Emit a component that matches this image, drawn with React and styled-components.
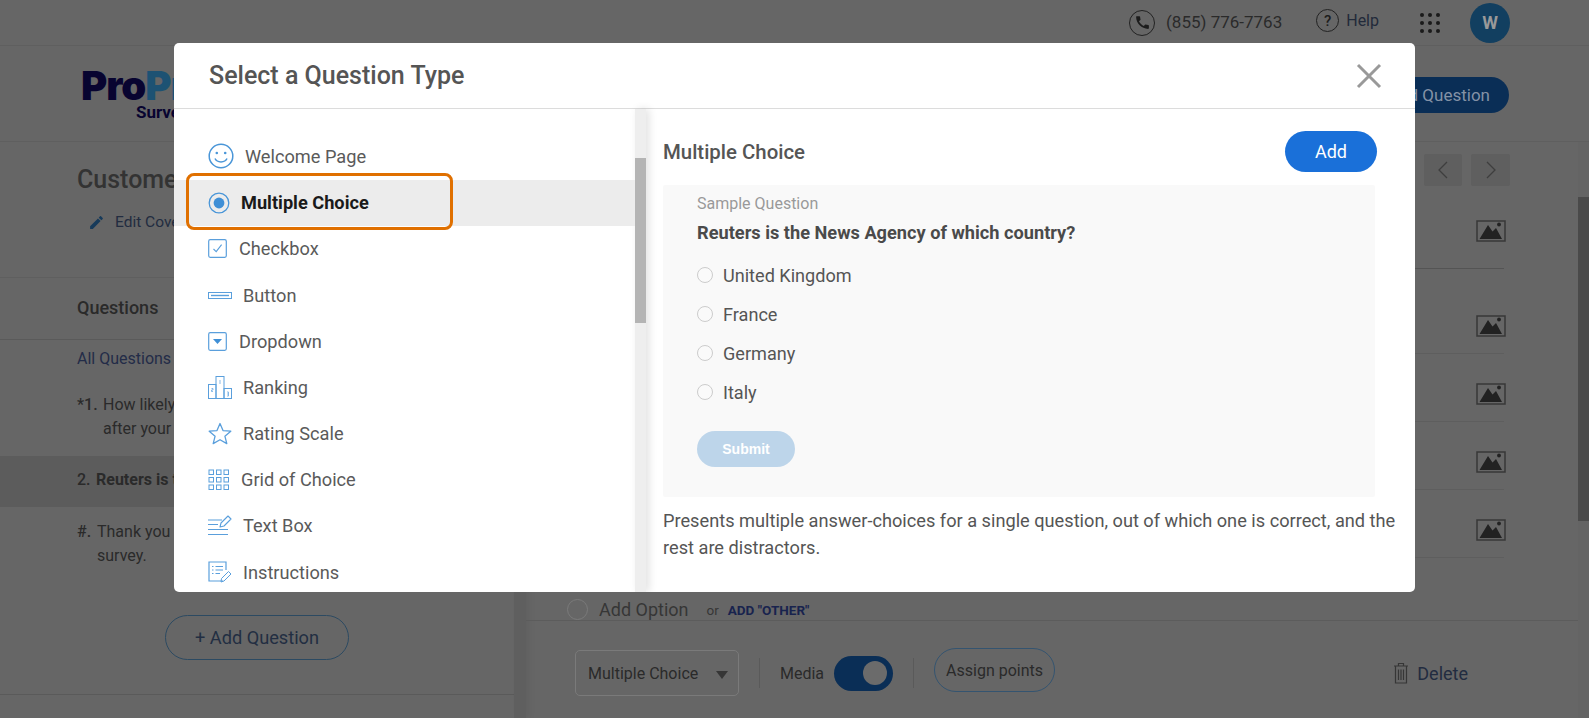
import React from 'react'
import styled, { createGlobalStyle } from 'styled-components'
import { MdCall, MdEdit } from 'react-icons/md'

const GlobalStyle = createGlobalStyle`
  html, body { margin: 0; padding: 0; height: 100%; overflow: hidden; background: #666; }
  * { box-sizing: border-box; }
  body { font-family: Roboto, "Liberation Sans", sans-serif; color: #2e2e2e; }
`

const Page = styled.div`
  position: relative;
  height: 718px;
  display: flex;
  flex-direction: column;
  background: #666;
  overflow: hidden;
`

const TopBar = styled.div`
  height: 46px;
  flex: none;
  display: flex;
  align-items: center;
  justify-content: flex-end;
  padding-right: 79px;
  border-bottom: 1px solid #5f5f5f;
`

const CallIcon = styled.span`
  width: 26px;
  height: 26px;
  border: 1.5px solid #222;
  border-radius: 50%;
  display: flex;
  align-items: center;
  justify-content: center;
  font-size: 17px;
  color: #1c1c1c;
  margin-right: 11px;
`

const PhoneNumber = styled.span`
  font-size: 17px;
  color: #2a2a2a;
  margin: -1px 34px 0 0;
`

const HelpIcon = styled.span`
  width: 23px;
  height: 23px;
  border: 1.5px solid #222;
  border-radius: 50%;
  display: flex;
  align-items: center;
  justify-content: center;
  font-size: 15px;
  font-weight: 500;
  color: #1c1c1c;
  margin: -4px 7px 0 0;
`

const HelpLabel = styled.span`
  font-size: 16px;
  color: #222a3a;
  margin: -4px 41px 0 0;
`

const Dots = styled.div`
  display: grid;
  grid-template-columns: repeat(3, 4px);
  gap: 4px;
  margin-right: 30px;
  & span {
    width: 4px;
    height: 4px;
    border-radius: 50%;
    background: #1a1a1a;
  }
`

const Avatar = styled.div`
  width: 40px;
  height: 40px;
  border-radius: 50%;
  background: #123f60;
  color: #999;
  font-size: 18px;
  font-weight: 700;
  display: flex;
  align-items: center;
  justify-content: center;
`

const Header = styled.div`
  height: 96px;
  flex: none;
  display: flex;
  align-items: center;
  justify-content: space-between;
  padding: 0 80px 0 81px;
  border-bottom: 1px solid #5f5f5f;
`

const Logo = styled.div`
  margin-top: 5px;
`

const LogoMark = styled.div`
  font-family: Inter, sans-serif;
  font-size: 40px;
  line-height: 32px;
  font-weight: 900;
  letter-spacing: -1px;
  color: #080430;
  & b { color: #1d5273; font-weight: 900; }
`

const LogoSub = styled.div`
  font-size: 17px;
  line-height: 20px;
  font-weight: 700;
  color: #080430;
  margin-left: 55px;
`

const AddQuestionTop = styled.button`
  width: 170px;
  height: 36px;
  border: 0;
  border-radius: 18px;
  background: #0a2e56;
  color: #8492a6;
  font: 400 17px Roboto, sans-serif;
  text-align: right;
  padding: 0 19px 0 0;
  margin-top: 3px;
`

const Body = styled.div`
  flex: 1;
  display: flex;
  min-height: 0;
`

const Sidebar = styled.aside`
  width: 514px;
  flex: none;
  display: flex;
  flex-direction: column;
`

const SidebarGutter = styled.div`
  width: 12px;
  flex: none;
  background: #5f5f5f;
  box-shadow: 4px 0 6px rgba(0, 0, 0, 0.05);
`

const SurveyBlock = styled.div`
  height: 136px;
  padding: 22px 0 0 77px;
  border-bottom: 1px solid #5f5f5f;
`

const SurveyTitle = styled.h2`
  margin: 0;
  font-size: 25px;
  line-height: 32px;
  font-weight: 500;
  color: #333;
`

const EditCover = styled.div`
  margin: 17px 0 0 11px;
  display: flex;
  align-items: center;
  gap: 10px;
  font-size: 15.5px;
  color: #222c40;
  & svg { font-size: 17px; color: #163a5a; }
`

const QuestionsHead = styled.div`
  height: 62px;
  padding: 0 0 2px 77px;
  display: flex;
  align-items: center;
  font-size: 18px;
  font-weight: 500;
  color: #2a2a2a;
  border-bottom: 1px solid #5a5a5a;
`

const AllQuestions = styled.div`
  padding: 9px 0 0 77px;
  font-size: 16px;
  line-height: 20px;
  color: #232c48;
`

const QuestionRow = styled.div`
  display: flex;
  align-items: ${props => (props.$active ? 'center' : 'flex-start')};
  height: ${props => (props.$active ? '51px' : 'auto')};
  margin-top: ${props => props.$top}px;
  padding: ${props => (props.$active ? '0 0 3px 77px' : '0 0 0 77px')};
  background: ${props => (props.$active ? '#5c5c5c' : 'transparent')};
  font-size: 16px;
  line-height: 24px;
  font-weight: ${props => (props.$active ? 700 : 400)};
  color: #2a2a2a;
`

const QuestionNo = styled.span`
  width: ${props => props.$width}px;
  flex: none;
  font-weight: 500;
`

const AddQuestion = styled.button`
  display: block;
  margin: 47px 0 0 165px;
  width: 184px;
  height: 45px;
  border: 1px solid #2c4a62;
  border-radius: 23px;
  background: transparent;
  color: #222e42;
  font: 400 18.2px Roboto, sans-serif;
`

const SidebarFoot = styled.div`
  margin-top: 34px;
  border-top: 1px solid #5a5a5a;
`

const Main = styled.main`
  flex: 1;
  display: flex;
  min-width: 0;
`

const MainColumn = styled.div`
  flex: 1;
  display: flex;
  flex-direction: column;
  min-width: 0;
`

const NavRow = styled.div`
  height: 54px;
  padding: 12px 0 0 0;
  display: flex;
  justify-content: flex-end;
  gap: 9px;
  margin-right: 68px;
`

const NavButton = styled.div`
  width: ${props => props.$width}px;
  height: 32px;
  background: #5f5f5f;
  border-radius: 2px;
  display: flex;
  align-items: center;
  justify-content: center;
`

const OptionRow = styled.div`
  height: ${props => props.$height}px;
  margin-right: 74px;
  border-bottom: 1px solid ${props => (props.$strong ? '#545454' : '#5e5e5e')};
  display: flex;
  align-items: flex-start;
  justify-content: flex-end;
  padding-top: ${props => props.$pad}px;
  & svg { margin-right: -2px; }
`

const AddOptionRow = styled.div`
  height: 63px;
  padding: 41px 0 0 41px;
  display: flex;
  align-items: center;
  border-bottom: 1px solid #5c5c5c;
`

const EmptyRadio = styled.span`
  width: 21px;
  height: 21px;
  border-radius: 50%;
  border: 1.5px solid #7a7a7a;
  margin-right: 11px;
`

const AddOptionText = styled.span`
  font-size: 18px;
  color: #363636;
`

const OrText = styled.span`
  font-size: 13.5px;
  color: #363636;
  margin: 0 9px 0 18px;
`

const OtherLink = styled.span`
  font-size: 13.5px;
  font-weight: 700;
  color: #18234e;
`

const FooterBar = styled.div`
  height: 97px;
  padding: 7px 110px 0 49px;
  display: flex;
  align-items: center;
`

const TypeSelect = styled.div`
  width: 164px;
  height: 46px;
  border: 1px solid #7a7a7a;
  border-radius: 5px;
  padding: 0 10px 0 12px;
  display: flex;
  align-items: center;
  justify-content: space-between;
  font-size: 16px;
  color: #2a2a2a;
  &::after {
    content: '';
    border-left: 6px solid transparent;
    border-right: 6px solid transparent;
    border-top: 8px solid #363636;
    margin-top: 3px;
  }
`

const Divider = styled.span`
  width: 1px;
  height: 30px;
  background: #5a5a5a;
  margin: ${props => props.$margin};
`

const MediaLabel = styled.span`
  font-size: 16px;
  color: #2a2a2a;
  margin-right: 10px;
`

const Toggle = styled.div`
  width: 59px;
  height: 35px;
  border-radius: 18px;
  background: #0a2e56;
  display: flex;
  align-items: center;
  justify-content: flex-end;
  padding-right: 6px;
  &::after {
    content: '';
    width: 24px;
    height: 24px;
    border-radius: 50%;
    background: #6b6b6b;
  }
`

const AssignPoints = styled.button`
  width: 121px;
  height: 44px;
  border: 1px solid #345470;
  border-radius: 22px;
  background: transparent;
  color: #2a2a2a;
  font: 400 16px Roboto, sans-serif;
  margin-top: -6px;
`

const DeleteAction = styled.div`
  margin-left: auto;
  display: flex;
  align-items: center;
  gap: 8px;
  font-size: 18px;
  color: #222c40;
`

const ScrollRail = styled.div`
  width: 11px;
  flex: none;
  background: #646464;
  &::before {
    content: '';
    display: block;
    height: 324px;
    margin-top: 55px;
    background: #4a4a4a;
  }
`

const Modal = styled.section`
  position: absolute;
  left: 174px;
  top: 43px;
  width: 1241px;
  height: 549px;
  background: #fff;
  border-radius: 5px;
  display: flex;
  flex-direction: column;
  overflow: hidden;
`

const ModalHead = styled.header`
  height: 66px;
  flex: none;
  padding: 0 33px 0 35px;
  display: flex;
  align-items: center;
  justify-content: space-between;
  border-bottom: 1px solid #dcdcdc;
`

const ModalTitle = styled.h1`
  margin: 0;
  font-size: 25px;
  font-weight: 500;
  color: #555;
`

const ModalBody = styled.div`
  flex: 1;
  display: flex;
  min-height: 0;
`

const TypeList = styled.nav`
  width: 461px;
  flex: none;
  padding-top: 24.4px;
  overflow: hidden;
`

const TypeItem = styled.div`
  position: relative;
  height: 46.2px;
  padding-left: 34px;
  display: flex;
  align-items: center;
  gap: ${props => props.$gap}px;
  background: ${props => (props.$active ? '#ececec' : 'transparent')};
  font-size: 18.2px;
  font-weight: ${props => (props.$active ? 700 : 400)};
  color: ${props => (props.$active ? '#1a1a1a' : '#5a5a5a')};
`

const Highlight = styled.span`
  position: absolute;
  left: 12px;
  top: -7px;
  width: 267px;
  height: 57px;
  border: 3px solid #e07000;
  border-radius: 8px;
`

const ListRail = styled.div`
  width: 11px;
  flex: none;
  background: #eee;
  box-shadow: 3px 0 8px rgba(0, 0, 0, 0.12);
  &::before {
    content: '';
    display: block;
    height: 165px;
    margin-top: 49px;
    background: #b4b4b4;
  }
`

const Detail = styled.div`
  flex: 1;
  padding: 22px 16px 0 17px;
  min-width: 0;
`

const DetailHead = styled.div`
  width: 714px;
  display: flex;
  align-items: center;
  justify-content: space-between;
`

const DetailTitle = styled.h3`
  margin: 0;
  font-size: 20.4px;
  font-weight: 500;
  color: #555;
`

const AddButton = styled.button`
  width: 92px;
  height: 41px;
  border: 0;
  border-radius: 21px;
  background: #1a70d9;
  color: #fff;
  font: 400 18px Roboto, sans-serif;
`

const SampleBox = styled.div`
  width: 712px;
  height: 312px;
  margin-top: 13px;
  padding: 9px 0 0 34px;
  background: #f9f9f9;
  border-radius: 2px;
`

const SampleLabel = styled.div`
  font-size: 16px;
  line-height: 20px;
  color: #999;
`

const SampleQuestion = styled.div`
  margin: 7px 0 11px;
  font-size: 18.2px;
  line-height: 24px;
  font-weight: 700;
  color: #4a4a4a;
`

const Choice = styled.div`
  height: 39px;
  display: flex;
  align-items: center;
  gap: 10px;
  font-size: 18.1px;
  color: #555;
  &::before {
    content: '';
    width: 14px;
    height: 14px;
    margin-top: -2px;
    border: 1px solid #ccc;
    border-radius: 50%;
    background: #fafafa;
  }
`

const SubmitButton = styled.button`
  display: block;
  width: 98px;
  height: 36px;
  margin-top: 19px;
  border: 0;
  border-radius: 18px;
  background: #bdd5ea;
  color: #fff;
  font: 700 14px "Liberation Sans", Arial, sans-serif;
`

const Description = styled.p`
  margin: 10px 0 0;
  font-size: 18.2px;
  line-height: 27px;
  color: #555;
`

const blue = '#5a9fdc'

const CloseIcon = () => (
  <svg width="26" height="26" viewBox="0 0 26 26">
    <path d="M2 2 L24 24 M24 2 L2 24" stroke="#999" strokeWidth="3" fill="none" />
  </svg>
)

const SmileIcon = () => (
  <svg width="26" height="26" viewBox="0 0 26 26" fill="none" stroke="#4a96d8" strokeWidth="1.5">
    <circle cx="13" cy="13" r="11.8" />
    <circle cx="8.8" cy="10" r="1.3" fill="#4a96d8" stroke="none" />
    <circle cx="17.2" cy="10" r="1.3" fill="#4a96d8" stroke="none" />
    <path d="M7 15.5 C9 20, 17 20, 19 15.5" />
  </svg>
)

const RadioIcon = () => (
  <svg width="22" height="22" viewBox="0 0 22 22" fill="none">
    <circle cx="11" cy="11" r="9.8" stroke="#4a96d8" strokeWidth="1.3" />
    <circle cx="11" cy="11" r="5.4" fill="#3f8fd6" />
  </svg>
)

const CheckIcon = () => (
  <svg width="19" height="19" viewBox="0 0 19 19" fill="none" stroke={blue}>
    <rect x="0.7" y="0.7" width="17.6" height="17.6" rx="1.5" strokeWidth="1.2" />
    <path d="M5.5 10 L8.2 12.6 L13.6 5.6" strokeWidth="1.1" />
  </svg>
)

const ButtonIcon = () => (
  <svg width="24" height="7" viewBox="0 0 24 7" fill="none" stroke={blue}>
    <rect x="0.5" y="0.5" width="23" height="6" strokeWidth="1" />
    <path d="M3 3.5 H21" strokeWidth="1.4" />
  </svg>
)

const DropdownIcon = () => (
  <svg width="19" height="19" viewBox="0 0 19 19" fill="none">
    <rect x="0.7" y="0.7" width="17.6" height="17.6" rx="1.5" stroke={blue} strokeWidth="1.2" />
    <path d="M5 7 H14 L9.5 12 Z" fill="#3f8fd6" />
  </svg>
)

const RankingIcon = () => (
  <svg width="24" height="23" viewBox="0 0 24 23" fill="none" stroke={blue} strokeWidth="1">
    <rect x="0.5" y="8.5" width="7.5" height="14" />
    <rect x="8" y="0.5" width="8" height="22" />
    <rect x="16" y="12.5" width="7.5" height="10" />
    <path d="M12 4 V8 M3.5 12.5 H5 V14 H3.5 V15.5 H5 M19 16 H20.5 V20 H19 M19 18 H20.5" strokeWidth="0.7" />
  </svg>
)

const StarIcon = () => (
  <svg width="24" height="23" viewBox="0 0 24 23" fill="none" stroke={blue} strokeWidth="1.3">
    <path d="M12 1.5 L15 8.6 L22.8 9.2 L16.9 14.2 L18.8 21.6 L12 17.7 L5.2 21.6 L7.1 14.2 L1.2 9.2 L9 8.6 Z" strokeLinejoin="round" />
  </svg>
)

const GridIcon = () => (
  <svg width="22" height="22" viewBox="0 0 22 22" fill="none" stroke={blue} strokeWidth="1">
    {[1, 8.5, 16].map(y =>
      [1, 8.5, 16].map(x => <rect key={`${x}-${y}`} x={x} y={y} width="4.5" height="4.5" />)
    )}
  </svg>
)

const TextBoxIcon = () => (
  <svg width="24" height="21" viewBox="0 0 24 21" fill="none" stroke={blue} strokeWidth="1.2">
    <path d="M0 5 H14 M0 9.5 H10 M0 14.5 H20 M0 19.5 H20" />
    <path d="M12 12 L13 8 L20 1 L23 4 L16 11 Z" strokeWidth="1.1" strokeLinejoin="round" />
  </svg>
)

const InstructionsIcon = () => (
  <svg width="24" height="22" viewBox="0 0 24 22" fill="none" stroke={blue} strokeWidth="1">
    <path d="M15 20 H1 V1 H18 V9" strokeWidth="1.2" />
    <path d="M4 5.5 H5.5 M7.5 5.5 H15 M4 9 H5.5 M7.5 9 H15 M4 12.5 H5.5 M7.5 12.5 H12" />
    <path d="M13 21 L13.5 17.5 L20.5 10.5 L23 13 L16 20 Z" strokeLinejoin="round" />
  </svg>
)

const ImageIcon = () => (
  <svg width="30" height="22" viewBox="0 0 30 22" fill="none">
    <rect x="1" y="1" width="28" height="20" stroke="#383838" strokeWidth="1.5" />
    <path d="M3.5 19 L12 5 L16.5 11.5 L20 8 L26 19 Z" fill="#222" />
    <circle cx="23" cy="4.5" r="1.9" fill="#222" />
  </svg>
)

const Chevron = ({ dir }) => (
  <svg width="12" height="18" viewBox="0 0 12 18" fill="none" stroke="#3e3e3e" strokeWidth="1.3">
    <path d={dir === 'left' ? 'M10 1 L2 9 L10 17' : 'M2 1 L10 9 L2 17'} />
  </svg>
)

const TrashIcon = () => (
  <svg width="16" height="22" viewBox="0 0 16 22" fill="none" stroke="#363636" strokeWidth="1.2">
    <path d="M1 4 H15 M5.5 4 V1.5 H10.5 V4 M2.5 4 V21 H13.5 V4 M5.5 7.5 V18 M8 7.5 V18 M10.5 7.5 V18" />
  </svg>
)

const questionTypes = [
  { label: 'Welcome Page', icon: <SmileIcon />, gap: 11 },
  { label: 'Multiple Choice', icon: <RadioIcon />, gap: 11, active: true },
  { label: 'Checkbox', icon: <CheckIcon />, gap: 12 },
  { label: 'Button', icon: <ButtonIcon />, gap: 11 },
  { label: 'Dropdown', icon: <DropdownIcon />, gap: 12 },
  { label: 'Ranking', icon: <RankingIcon />, gap: 11 },
  { label: 'Rating Scale', icon: <StarIcon />, gap: 11 },
  { label: 'Grid of Choice', icon: <GridIcon />, gap: 11 },
  { label: 'Text Box', icon: <TextBoxIcon />, gap: 11 },
  { label: 'Instructions', icon: <InstructionsIcon />, gap: 11 },
]

const App = () => (
  <Page>
    <GlobalStyle />
    <TopBar>
      <CallIcon><MdCall /></CallIcon>
      <PhoneNumber>(855) 776-7763</PhoneNumber>
      <HelpIcon>?</HelpIcon>
      <HelpLabel>Help</HelpLabel>
      <Dots>{Array.from({ length: 9 }, (_, i) => <span key={i} />)}</Dots>
      <Avatar>W</Avatar>
    </TopBar>
    <Header>
      <Logo>
        <LogoMark>Pro<b>Profs</b></LogoMark>
        <LogoSub>Survey Maker</LogoSub>
      </Logo>
      <AddQuestionTop>Add Question</AddQuestionTop>
    </Header>
    <Body>
      <Sidebar>
        <SurveyBlock>
          <SurveyTitle>Customer Satisfaction Survey</SurveyTitle>
          <EditCover><MdEdit />Edit Cover Page</EditCover>
        </SurveyBlock>
        <QuestionsHead>Questions</QuestionsHead>
        <AllQuestions>All Questions</AllQuestions>
        <QuestionRow $top={24}>
          <QuestionNo $width={26}>*1.</QuestionNo>
          <span>How likely are you to recommend our store to a friend<br />after your purchase?</span>
        </QuestionRow>
        <QuestionRow $active $top={15}>
          <QuestionNo $width={19}>2.</QuestionNo>
          <span>Reuters is the News Agency of which country?</span>
        </QuestionRow>
        <QuestionRow $top={13}>
          <QuestionNo $width={20}>#.</QuestionNo>
          <span>Thank you for taking the time to complete this<br />survey.</span>
        </QuestionRow>
        <AddQuestion>+ Add Question</AddQuestion>
        <SidebarFoot />
      </Sidebar>
      <SidebarGutter />
      <Main>
        <MainColumn>
          <NavRow>
            <NavButton $width={38}><Chevron dir="left" /></NavButton>
            <NavButton $width={39}><Chevron dir="right" /></NavButton>
          </NavRow>
          <OptionRow $height={73} $pad={24} $strong><ImageIcon /></OptionRow>
          <OptionRow $height={85} $pad={46}><ImageIcon /></OptionRow>
          <OptionRow $height={68} $pad={29}><ImageIcon /></OptionRow>
          <OptionRow $height={68} $pad={29}><ImageIcon /></OptionRow>
          <OptionRow $height={68} $pad={29}><ImageIcon /></OptionRow>
          <AddOptionRow>
            <EmptyRadio />
            <AddOptionText>Add Option</AddOptionText>
            <OrText>or</OrText>
            <OtherLink>ADD "OTHER"</OtherLink>
          </AddOptionRow>
          <FooterBar>
            <TypeSelect>Multiple Choice</TypeSelect>
            <Divider $margin="0 20px" />
            <MediaLabel>Media</MediaLabel>
            <Toggle />
            <Divider $margin="0 20px" />
            <AssignPoints>Assign points</AssignPoints>
            <DeleteAction><TrashIcon />Delete</DeleteAction>
          </FooterBar>
        </MainColumn>
        <ScrollRail />
      </Main>
    </Body>

    <Modal>
      <ModalHead>
        <ModalTitle>Select a Question Type</ModalTitle>
        <CloseIcon />
      </ModalHead>
      <ModalBody>
        <TypeList>
          {questionTypes.map(type => (
            <TypeItem key={type.label} $gap={type.gap} $active={type.active}>
              {type.icon}
              {type.label}
              {type.active && <Highlight />}
            </TypeItem>
          ))}
        </TypeList>
        <ListRail />
        <Detail>
          <DetailHead>
            <DetailTitle>Multiple Choice</DetailTitle>
            <AddButton>Add</AddButton>
          </DetailHead>
          <SampleBox>
            <SampleLabel>Sample Question</SampleLabel>
            <SampleQuestion>Reuters is the News Agency of which country?</SampleQuestion>
            <Choice>United Kingdom</Choice>
            <Choice>France</Choice>
            <Choice>Germany</Choice>
            <Choice>Italy</Choice>
            <SubmitButton>Submit</SubmitButton>
          </SampleBox>
          <Description>
            Presents multiple answer-choices for a single question, out of which one is correct, and the rest are distractors.
          </Description>
        </Detail>
      </ModalBody>
    </Modal>
  </Page>
)

export default App
